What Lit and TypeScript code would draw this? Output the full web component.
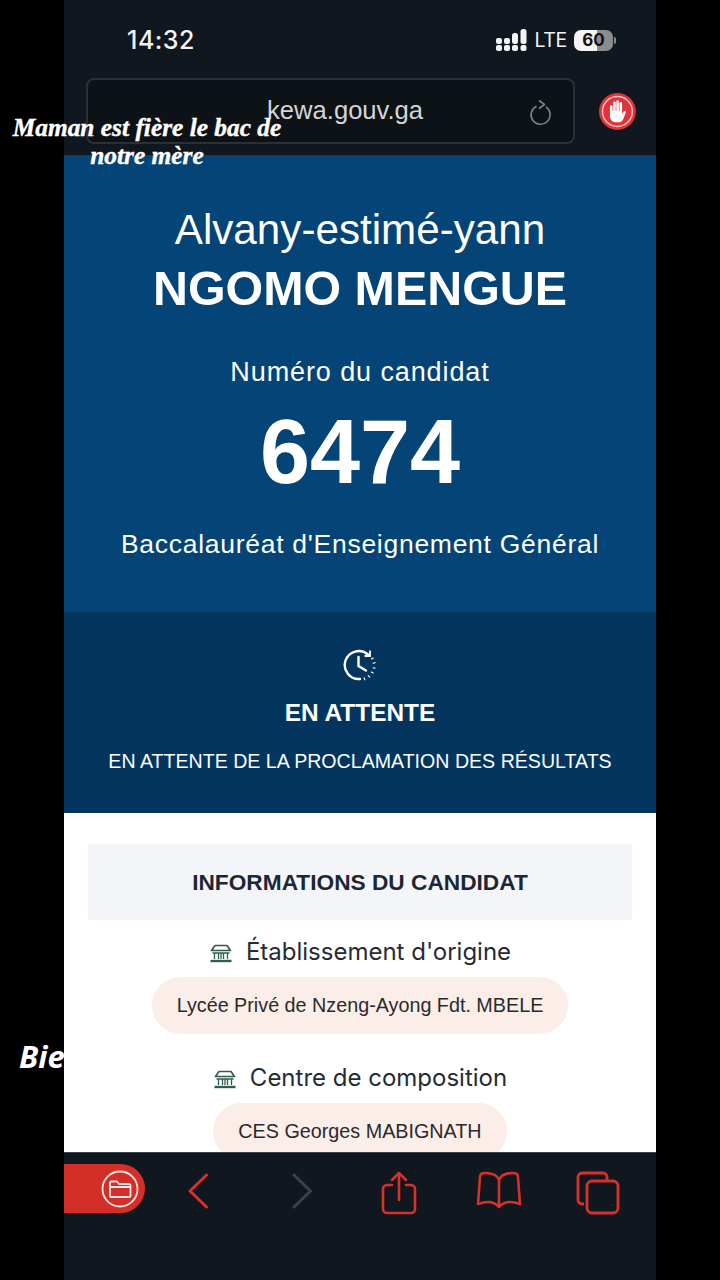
import { LitElement, css, html, svg } from "lit";
import { customElement } from "lit/decorators.js";

const buildingIcon = svg`
  <path d="M2 7.5 L5.5 2.5 H17.5 L21 7.5 Z M3 10 H20" fill="none" stroke="#2f5d50" stroke-width="1.7" stroke-linejoin="round" />
  <path d="M5 10 V16 M9 10 V16 M11.5 10 V16 M14 10 V16 M18 10 V16" fill="none" stroke="#2f5d50" stroke-width="1.3" />
  <path d="M1 18 H22" fill="none" stroke="#2f5d50" stroke-width="2.4" />
`;

@customElement("app-root")
export class AppRoot extends LitElement {
  static styles = css`
    :host {
      display: block;
      position: relative;
      width: 720px;
      height: 1280px;
      background: #000;
      overflow: hidden;
      font-family: "Liberation Sans", Arial, sans-serif;
    }

    .phone {
      position: relative;
      display: flex;
      flex-direction: column;
      width: 592px;
      height: 1280px;
      margin-left: 64px;
      background: #10171e;
    }

    .top {
      height: 156px;
      flex: none;
      box-sizing: border-box;
      border-bottom: 1px solid #2c353d;
    }

    .status {
      display: flex;
      align-items: center;
      justify-content: space-between;
      height: 78px;
      box-sizing: border-box;
      padding: 2px 43px 0 63px;
      color: #f2f3f4;
    }

    .time {
      font-family: Inter, sans-serif;
      font-size: 25px;
      font-weight: 500;
      letter-spacing: 0.5px;
    }

    .status-right {
      display: flex;
      align-items: center;
      gap: 7px;
    }

    .lte {
      font-family: Inter, sans-serif;
      font-size: 19.5px;
      letter-spacing: -0.3px;
    }

    .battery {
      position: relative;
      display: flex;
      align-items: center;
      justify-content: center;
      width: 39px;
      height: 21px;
      border-radius: 7px;
      background: linear-gradient(90deg, #f4f4f4 59%, #8a8c8f 59%);
      color: #111;
      font-family: Inter, sans-serif;
      font-size: 17px;
      font-weight: 700;
    }

    .battery::after {
      content: "";
      position: absolute;
      right: -3px;
      top: 7px;
      width: 2px;
      height: 7px;
      border-radius: 0 2px 2px 0;
      background: #8a8c8f;
    }

    .address-row {
      display: flex;
      align-items: center;
      gap: 24px;
      padding: 0 20px 0 22px;
    }

    .address {
      display: flex;
      align-items: center;
      justify-content: center;
      position: relative;
      width: 491px;
      height: 66px;
      box-sizing: border-box;
      border: 2px solid #2a3037;
      border-radius: 8px;
      background: #0d1216;
      color: #d3d5d7;
      font-size: 25.6px;
      padding: 0 0 1px 29px;
    }

    .reload {
      position: absolute;
      right: 20px;
      top: 19px;
    }

    .blue {
      flex: none;
      height: 456px;
      box-sizing: border-box;
      padding-top: 50px;
      background: #054476;
      color: #fff;
      text-align: center;
    }

    .first-name {
      font-size: 42.2px;
      line-height: 48px;
    }

    .last-name {
      margin-top: 4px;
      font-size: 48.4px;
      line-height: 60px;
      font-weight: 700;
    }

    .number-label {
      margin-top: 36px;
      font-size: 27px;
      line-height: 36px;
      letter-spacing: 0.9px;
    }

    .number {
      margin-top: 12px;
      font-size: 90px;
      line-height: 100px;
      font-weight: 700;
    }

    .exam {
      margin-top: 24px;
      font-size: 26.5px;
      line-height: 36px;
      letter-spacing: 0.72px;
    }

    .pending {
      flex: none;
      height: 201px;
      box-sizing: border-box;
      padding-top: 36px;
      background: #03355f;
      color: #fff;
      text-align: center;
    }

    .pending svg {
      display: block;
      margin: 0 auto;
    }

    .pending-title {
      margin-top: 15px;
      font-size: 24.4px;
      line-height: 32px;
      font-weight: 700;
    }

    .pending-text {
      margin-top: 18px;
      font-size: 19.6px;
      line-height: 28px;
    }

    .content {
      flex: none;
      height: 339px;
      box-sizing: border-box;
      padding: 31px 24px 0;
      background: #fff;
      overflow: hidden;
      text-align: center;
    }

    .content-header {
      display: flex;
      align-items: center;
      justify-content: center;
      height: 76px;
      background: #f3f5f9;
      color: #1d2733;
      font-size: 22.7px;
      font-weight: 700;
    }

    .field {
      display: flex;
      flex-direction: column;
      align-items: center;
      margin-bottom: 12px;
    }

    .field-label {
      display: flex;
      align-items: center;
      gap: 13px;
      height: 51px;
      padding-top: 6px;
      color: #252b33;
      font-family: Inter, sans-serif;
      font-size: 24px;
    }

    .field-label svg {
      margin-top: 3px;
    }

    .field-value {
      display: flex;
      align-items: center;
      height: 57px;
      padding: 0 25px;
      border-radius: 29px;
      background: #fbeee8;
      color: #2a2a2e;
      font-size: 19.75px;
    }

    .toolbar {
      flex: 1;
      display: grid;
      grid-template-columns: 81px 105px 104px 90px 110px 88px;
      align-items: start;
      box-sizing: border-box;
      padding-top: 11px;
      border-top: 1px solid #39414a;
      background: #10171e;
    }

    .folder-tab {
      display: flex;
      align-items: center;
      justify-content: flex-end;
      height: 49px;
      padding-right: 6px;
      box-sizing: border-box;
      border-radius: 0 25px 25px 0;
      background: #d32e27;
    }

    .slot {
      display: flex;
      justify-content: center;
      padding-top: 7px;
    }

    .slot.chevron {
      padding-top: 9px;
    }

    .caption {
      position: absolute;
      color: #fff;
      font-family: "Liberation Serif", serif;
      font-style: italic;
      font-weight: 700;
      text-align: center;
    }

    .caption-top {
      left: 0;
      top: 113px;
      width: 294px;
      font-size: 25.4px;
      line-height: 28px;
      -webkit-text-stroke: 0.4px #fff;
    }

    .caption-side {
      left: 19px;
      top: 1036px;
      font-family: "Open Sans", sans-serif;
      font-size: 31px;
      line-height: 40px;
    }
  `;

  render() {
    return html`
      <div class="caption caption-side">Bie</div>
      <div class="phone">
        <div class="top">
          <div class="status">
            <span class="time">14:32</span>
            <div class="status-right">
              <svg width="31" height="22" viewBox="0 0 31 22" fill="#f2f3f4">
                <rect x="0" y="9" width="6" height="6" rx="2" /><rect x="0" y="16" width="6" height="6" rx="2" />
                <rect x="8" y="9" width="6" height="6" rx="2" /><rect x="8" y="16" width="6" height="6" rx="2" />
                <rect x="16" y="4" width="6" height="11" rx="2.5" /><rect x="16" y="16" width="6" height="6" rx="2" />
                <rect x="24.5" y="0" width="6" height="15" rx="2.5" /><rect x="24.5" y="16" width="6" height="6" rx="2" />
              </svg>
              <span class="lte">LTE</span>
              <div class="battery">60</div>
            </div>
          </div>
          <div class="address-row">
            <div class="address">
              kewa.gouv.ga
              <svg class="reload" width="24" height="28" viewBox="0 0 24 28" fill="none" stroke="#7d8286" stroke-width="1.6">
                <path d="M7.5 7.2 A9.5 9.5 0 1 0 17 8" />
                <path d="M10 1.5 L15.5 5.5 L10 9.5" stroke-linejoin="round" />
              </svg>
            </div>
            <svg width="37" height="37" viewBox="0 0 37 37">
              <circle cx="18.5" cy="18.5" r="18.5" fill="#e3333a" />
              <circle cx="18.5" cy="18.5" r="15" fill="none" stroke="#f6c6c6" stroke-width="1.4" />
              <path
                d="M11 13.5 a1.3 1.3 0 0 1 2.6 0 V18 h.6 V9.8 a1.3 1.3 0 0 1 2.6 0 V18 h.6 V8.6 a1.3 1.3 0 0 1 2.6 0 V18 h.6 V10.2 a1.3 1.3 0 0 1 2.6 0 V21 l1.6 -2.6 c.9 -1.3 2.8 -.4 2.1 1 L24.4 26 c-1 2.2 -2.6 3.4 -5.2 3.4 h-1.4 C13.6 29.4 11 27 11 23 Z"
                fill="#fff"
              />
            </svg>
          </div>
        </div>

        <div class="blue">
          <div class="first-name">Alvany-estimé-yann</div>
          <div class="last-name">NGOMO MENGUE</div>
          <div class="number-label">Numéro du candidat</div>
          <div class="number">6474</div>
          <div class="exam">Baccalauréat d'Enseignement Général</div>
        </div>

        <div class="pending">
          <svg width="34" height="34" viewBox="0 0 34 34" fill="none" stroke="#fff" stroke-width="2.4">
            <path d="M25 6.5 A14 14 0 1 0 17 31" stroke-linecap="round" />
            <path d="M21 31 L22 30.6 M25.5 28.8 L26.3 28 M29 25 L29.5 24 M31 20.5 L31.2 19.5 M31.3 15.5 L31 14.5 M29.7 11 L29 10" stroke-width="3" />
            <path d="M27 2.5 V8 H21.5" stroke-width="1.8" />
            <path d="M15.5 9 V18 L23 22.5" stroke-linecap="round" />
          </svg>
          <div class="pending-title">EN ATTENTE</div>
          <div class="pending-text">EN ATTENTE DE LA PROCLAMATION DES RÉSULTATS</div>
        </div>

        <div class="content">
          <div class="content-header">INFORMATIONS DU CANDIDAT</div>
          <div class="field">
            <div class="field-label">
              <svg width="24" height="20" viewBox="0 0 23 20">${buildingIcon}</svg>
              Établissement d'origine
            </div>
            <div class="field-value">Lycée Privé de Nzeng-Ayong Fdt. MBELE</div>
          </div>
          <div class="field">
            <div class="field-label">
              <svg width="24" height="20" viewBox="0 0 23 20">${buildingIcon}</svg>
              Centre de composition
            </div>
            <div class="field-value">CES Georges MABIGNATH</div>
          </div>
        </div>

        <div class="toolbar">
          <div class="folder-tab">
            <svg width="38" height="38" viewBox="0 0 38 38" fill="none" stroke="#fbe9e5">
              <circle cx="19" cy="19" r="17.5" stroke-width="1.8" />
              <path d="M9 26 V13 a1.5 1.5 0 0 1 1.5 -1.5 H16 l2 2.5 H28 a1.5 1.5 0 0 1 1.5 1.5 V26 a1 1 0 0 1 -1 1 H10 a1 1 0 0 1 -1 -1 Z M9 17 H29.5" stroke-width="1.8" stroke-linejoin="round" />
            </svg>
          </div>
          <div class="slot chevron">
            <svg width="20" height="36" viewBox="0 0 20 36" fill="none" stroke="#d6322c" stroke-width="3" stroke-linecap="round" stroke-linejoin="round">
              <path d="M18.5 2 L2 18 L18.5 34" />
            </svg>
          </div>
          <div class="slot chevron">
            <svg width="20" height="36" viewBox="0 0 20 36" fill="none" stroke="#3a424a" stroke-width="3" stroke-linecap="round" stroke-linejoin="round">
              <path d="M2 2 L18.5 18 L2 34" />
            </svg>
          </div>
          <div class="slot">
            <svg width="36" height="44" viewBox="0 0 36 44" fill="none" stroke="#d6322c" stroke-width="2.6" stroke-linecap="round" stroke-linejoin="round">
              <path d="M11 14 H6 a4 4 0 0 0 -4 4 V38 a4 4 0 0 0 4 4 H30 a4 4 0 0 0 4 -4 V18 a4 4 0 0 0 -4 -4 H25" />
              <path d="M18 29 V2 M11 9 L18 2 L25 9" />
            </svg>
          </div>
          <div class="slot">
            <svg width="46" height="38" viewBox="0 0 46 38" fill="none" stroke="#d6322c" stroke-width="2.6" stroke-linejoin="round" stroke-linecap="round">
              <path d="M23 9 C21 3 15 2 9 2 C6 2 4 3 4 6 L2 33 C10 30 18 30 23 36 C28 30 36 30 44 33 L42 6 C42 3 40 2 37 2 C31 2 25 3 23 9 Z M23 9 V36" />
            </svg>
          </div>
          <div class="slot">
            <svg width="44" height="44" viewBox="0 0 44 44" fill="none" stroke="#d6322c" stroke-width="2.8" stroke-linejoin="round">
              <path d="M8 33 H6 a4 4 0 0 1 -4 -4 V6 a4 4 0 0 1 4 -4 H27 a4 4 0 0 1 4 4 V10" />
              <rect x="11" y="10" width="31" height="32" rx="5" />
            </svg>
          </div>
        </div>
      </div>
      <div class="caption caption-top">Maman est fière le bac de<br />notre mère</div>
    `;
  }
}

declare global {
  interface HTMLElementTagNameMap {
    "app-root": AppRoot;
  }
}
